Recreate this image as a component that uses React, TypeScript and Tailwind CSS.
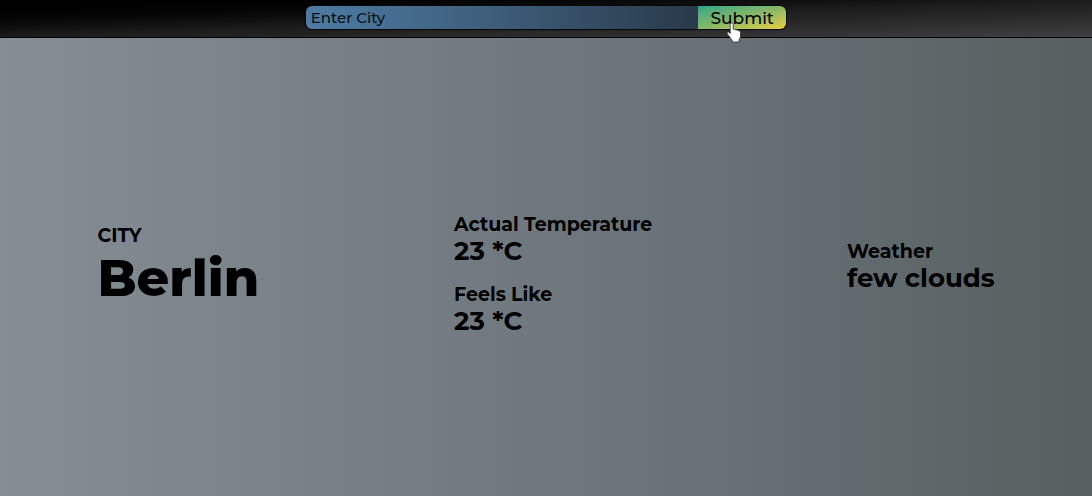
import { useState } from "react";
import type { FormEvent } from "react";

type ReadingProps = { label: string; value: string; large?: boolean };

function Reading({ label, value, large = false }: ReadingProps) {
  return (
    <div>
      <h2 className="text-[19px] leading-[22px] font-bold">{label}</h2>
      <p
        className={
          large
            ? "text-[51px] leading-[62px] font-extrabold"
            : "text-[26px] leading-[30px] font-bold"
        }
      >
        {value}
      </p>
    </div>
  );
}

function HandPointer() {
  return (
    <svg
      viewBox="0 0 16 21"
      aria-hidden="true"
      className="pointer-events-none absolute top-4 left-7 h-[21px] w-4"
    >
      <path
        d="M5.7 1C6.6 1 7.2 1.7 7.2 2.5V7.4C7.7 6.8 9.5 6.9 9.7 8.1C10.4 7.5 12 7.7 12.2 8.9C13 8.4 14.5 8.9 14.5 10.3V14C14.5 15.7 13.6 16.6 13 18V20H6.3V18.4C5 16.8 3.3 14.3 1.3 11.9C.5 10.7 1.7 9.5 2.9 10.3L4.2 11.5V2.5C4.2 1.7 4.8 1 5.7 1Z"
        fill="#fff"
        stroke="#1c1c1c"
        strokeWidth="0.7"
        strokeLinejoin="round"
      />
    </svg>
  );
}

export default function App() {
  const [query, setQuery] = useState("");
  const submit = (event: FormEvent) => event.preventDefault();

  return (
    <div className="flex min-h-screen flex-col bg-linear-to-r from-[#868e95] via-[#687177] via-65% to-[#566060] font-[Montserrat,Inter,sans-serif] text-black">
      <header className="border-b border-black bg-linear-to-br from-black via-[#1c1c1c] to-[#414040] pt-1.5 pb-2">
        <form
          onSubmit={submit}
          className="mx-auto flex h-[23px] w-11/25 rounded-md shadow-[0_0_1px_1px_#080808]"
        >
          <input
            type="text"
            aria-label="City"
            placeholder="Enter City"
            value={query}
            onChange={(event) => setQuery(event.target.value)}
            className="min-w-0 flex-1 rounded-l-md bg-linear-to-r from-[#4d7ba4] via-[#3d5c78] to-[#293a4a] px-[5px] pt-0.5 text-[15px] font-medium outline-none placeholder:text-[#080d13]"
          />
          <button
            type="submit"
            className="relative w-22 cursor-pointer rounded-r-md bg-linear-to-br from-[#21a786] via-[#86b765] to-[#e8cf3c] pt-0.5 text-[17px] leading-[21px] font-medium"
          >
            Submit
            <HandPointer />
          </button>
        </form>
      </header>
      <main className="flex flex-1 items-center justify-around">
        <section>
          <Reading label="CITY" value="Berlin" large />
        </section>
        <section className="flex flex-col gap-[18px] pt-4">
          <Reading label="Actual Temperature" value="23 *C" />
          <Reading label="Feels Like" value="23 *C" />
        </section>
        <section>
          <Reading label="Weather" value="few clouds" />
        </section>
      </main>
    </div>
  );
}
